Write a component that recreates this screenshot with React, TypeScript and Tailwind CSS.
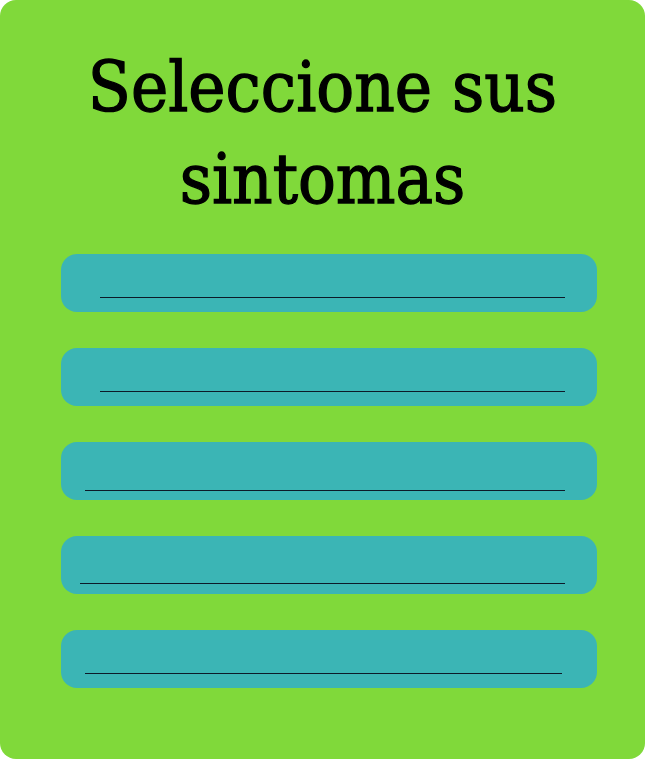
const rows = [
  { ml: 'ml-[39px]', w: 'w-[465px]', mt: 'mt-[43px]' },
  { ml: 'ml-[39px]', w: 'w-[465px]', mt: 'mt-[43px]' },
  { ml: 'ml-[24px]', w: 'w-[480px]', mt: 'mt-[48px]' },
  { ml: 'ml-[19px]', w: 'w-[485px]', mt: 'mt-[47px]' },
  { ml: 'ml-[24px]', w: 'w-[477px]', mt: 'mt-[43px]' },
];

export default function App() {
  return (
    <div className="w-[645px] h-[759px] bg-white">
      <div className="w-full h-full bg-[#80d93a] rounded-[16px] flex flex-col items-center pt-[41px]">
        <h1
          className="text-center text-black text-[70px] leading-[92px] w-[520px] [-webkit-text-stroke:1.3px_black]"
          style={{ fontFamily: '"DejaVu Serif", serif', fontStretch: 'condensed' }}
        >
          Seleccione sus sintomas
        </h1>
        <div className="w-full pl-[61px] pr-[48px] mt-[29px] flex flex-col gap-[36px]">
          {rows.map((r, i) => (
            <div key={i} className="h-[58px] rounded-[16px] bg-[#3bb5b5] overflow-hidden">
              <div className={`${r.ml} ${r.w} ${r.mt} h-px bg-[#0c1a28]`} />
            </div>
          ))}
        </div>
      </div>
    </div>
  );
}
